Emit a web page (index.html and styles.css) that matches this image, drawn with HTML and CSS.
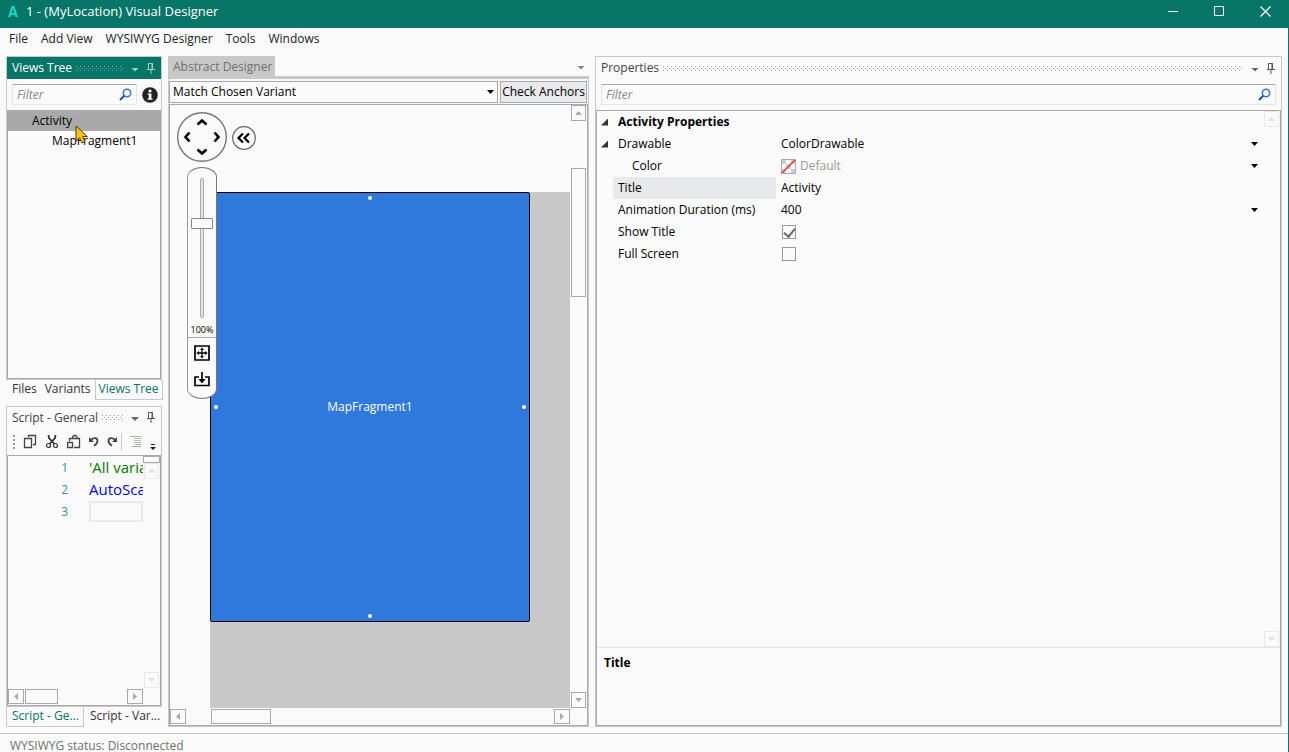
FILE: index.html
```html
<!DOCTYPE html>
<html lang="en">

<head>
    <meta charset="UTF-8">
    <meta name="viewport" content="width=device-width, initial-scale=1.0">
    <title>1 - (MyLocation) Visual Designer</title>
    <link rel="stylesheet" href="styles.css">
</head>

<body>
    <!-- shared icons -->
    <svg class="sprite" aria-hidden="true">
        <symbol id="pin" viewBox="0 0 8 11">
            <path d="M0 6.5H8M1.5 6V.5H5.5V6M5 0V6M4 7V11" fill="none" stroke="currentColor" />
        </symbol>
        <symbol id="search" viewBox="0 0 13 13">
            <circle cx="8" cy="5" r="3.7" fill="none" stroke="#3c78c3" stroke-width="1.6" />
            <path d="M5.2 7.8L1 12" stroke="#24509a" stroke-width="2" />
        </symbol>
    </svg>

    <header class="title-bar">
        <svg class="app-logo" width="10" height="11" viewBox="0 0 10 11">
            <path d="M0 11L3.6 0H6.4L10 11H7.4L6.8 9H3.2L2.6 11ZM3.8 6.9H6.2L5 2.8Z" fill="#1fd1c1" fill-rule="evenodd" />
        </svg>
        <h1>1 - (MyLocation) Visual Designer</h1>
        <div class="window-buttons">
            <button type="button" aria-label="Minimize"><svg width="11" height="11"><path d="M0 5.5H10" stroke="#fff" /></svg></button>
            <button type="button" aria-label="Maximize"><svg width="11" height="11"><path d="M.5 .5H9.5V9.5H.5Z" stroke="#fff" fill="none" /></svg></button>
            <button type="button" aria-label="Close"><svg width="11" height="11"><path d="M.5 .5L10.5 10.5M10.5 .5L.5 10.5" stroke="#fff" stroke-width="1.2" /></svg></button>
        </div>
    </header>

    <nav class="menu">
        <button type="button">File</button>
        <button type="button">Add View</button>
        <button type="button">WYSIWYG Designer</button>
        <button type="button">Tools</button>
        <button type="button">Windows</button>
    </nav>

    <main class="workspace">
        <div class="sidebar">
            <section class="dock">
                <div class="panel">
                    <div class="panel-header active">
                        <h2>Views Tree</h2>
                        <span class="grip"></span>
                        <button type="button" class="arrow-btn" aria-label="Window position"></button>
                        <button type="button" class="pin-btn" aria-label="Auto hide"><svg width="8" height="11"><use href="#pin" /></svg></button>
                    </div>
                    <div class="filter-row">
                        <label class="filter">
                            <input type="text" placeholder="Filter" aria-label="Filter views">
                            <svg width="13" height="13"><use href="#search" /></svg>
                        </label>
                        <button type="button" class="info" aria-label="Info">
                            <svg width="16" height="16" viewBox="0 0 16 16">
                                <circle cx="8" cy="8" r="7.8" fill="#222" />
                                <circle cx="8" cy="4" r="1.6" fill="#fff" />
                                <path d="M5.8 6.5H9.4V11.4H10.6V12.8H5.6V11.4H6.8V7.9H5.8Z" fill="#fff" />
                            </svg>
                        </button>
                    </div>
                    <ul class="tree">
                        <li class="selected">Activity
                            <svg class="pointer" width="14" height="19" viewBox="0 0 14 19">
                                <path d="M1 1V16L4.5 12.8L7 18L10 16.6L7.6 11.6H12.4Z" fill="#ffc20e" stroke="#4a3a10" />
                            </svg>
                        </li>
                        <li class="child">MapFragment1</li>
                    </ul>
                </div>
                <div class="tabs">
                    <button type="button">Files</button>
                    <button type="button">Variants</button>
                    <button type="button" class="current">Views Tree</button>
                </div>
            </section>

            <section class="dock">
                <div class="panel">
                    <div class="panel-header">
                        <h2>Script - General</h2>
                        <span class="grip"></span>
                        <button type="button" class="arrow-btn" aria-label="Window position"></button>
                        <button type="button" class="pin-btn" aria-label="Auto hide"><svg width="8" height="11"><use href="#pin" /></svg></button>
                    </div>
                    <div class="toolbar">
                        <span class="handle"></span>
                        <button type="button" aria-label="Copy">
                            <svg width="14" height="15" viewBox="0 0 14 15"><path d="M5.5 3V1.5H12.5V10.5H10M1.5 4.5H8.5V13.5H1.5Z" fill="none" stroke="#444" stroke-width="1.3" /></svg>
                        </button>
                        <button type="button" aria-label="Cut">
                            <svg width="14" height="15" viewBox="0 0 14 15"><path d="M3.5 1L4 4L9.5 10M10.5 1L10 4L4.5 10" fill="none" stroke="#333" stroke-width="1.8" /><circle cx="3.5" cy="11.5" r="2" fill="none" stroke="#333" stroke-width="1.2" /><circle cx="10.5" cy="11.5" r="2" fill="none" stroke="#333" stroke-width="1.2" /></svg>
                        </button>
                        <button type="button" aria-label="Paste">
                            <svg width="14" height="15" viewBox="0 0 14 15"><path d="M2.5 7V4.5H12.5V13.5H7M5.5 4.5V3L7 1.5H8.5L10 3V4.5M.5 8.5H5.5V13.5H.5Z" fill="none" stroke="#444" stroke-width="1.3" /></svg>
                        </button>
                        <button type="button" aria-label="Undo">
                            <svg width="10" height="11" viewBox="0 0 10 11"><path d="M1.5 4.5C4 1 8.5 1.5 8.5 5C8.5 7.5 7 8.5 5 9.8" fill="none" stroke="#444" stroke-width="1.8" /><path d="M0 1V6H5Z" fill="#444" /></svg>
                        </button>
                        <button type="button" aria-label="Redo">
                            <svg width="10" height="11" viewBox="0 0 10 11"><path d="M8.5 4.5C6 1 1.5 1.5 1.5 5C1.5 7.5 3 8.5 5 9.8" fill="none" stroke="#444" stroke-width="1.8" /><path d="M10 1V6H5Z" fill="#444" /></svg>
                        </button>
                        <span class="separator"></span>
                        <button type="button" class="indent" aria-label="Indent">
                            <svg width="12" height="11" viewBox="0 0 12 11"><path d="M0 .5H11M2 10.5H11M5 8.5H11" stroke="#aaa" /><path d="M4 2.5H11M4 4.5H11M4 6.5H11" stroke="#b5c8a8" /></svg>
                        </button>
                        <button type="button" class="overflow" aria-label="More">
                            <svg width="6" height="6" viewBox="0 0 6 6"><path d="M1 .5H5" stroke="#222" /><path d="M0 3H6L3 6Z" fill="#222" /></svg>
                        </button>
                    </div>
                    <div class="editor">
                        <ol class="code">
                            <li><span class="number">1</span><span class="line comment">'All varia</span></li>
                            <li><span class="number">2</span><span class="line keyword">AutoSca</span></li>
                            <li><span class="number">3</span><span class="line caret"></span></li>
                        </ol>
                        <div class="scroll vertical faded">
                            <span class="splitter"></span>
                            <button type="button" class="step up" aria-label="Scroll up"></button>
                            <button type="button" class="step down" aria-label="Scroll down"></button>
                        </div>
                        <div class="scroll horizontal">
                            <button type="button" class="step left" aria-label="Scroll left"></button>
                            <span class="thumb"></span>
                            <button type="button" class="step right" aria-label="Scroll right"></button>
                        </div>
                    </div>
                </div>
                <div class="tabs halves">
                    <button type="button" class="current">Script - Ge...</button>
                    <button type="button">Script - Var...</button>
                </div>
            </section>
        </div>

        <section class="designer">
            <div class="document-tabs">
                <button type="button">Abstract Designer</button>
                <button type="button" class="arrow-btn" aria-label="Open documents"></button>
            </div>
            <div class="designer-body">
                <div class="variant-row">
                    <div class="combo">
                        <select aria-label="Variant">
                            <option>Match Chosen Variant</option>
                        </select>
                    </div>
                    <button type="button" class="check-anchors">Check Anchors</button>
                </div>
                <div class="canvas-area">
                    <div class="canvas">
                        <div class="sheet"></div>
                        <div class="view">
                            <i class="dot top"></i>
                            <i class="dot left"></i>
                            <i class="dot right"></i>
                            <i class="dot bottom"></i>
                            MapFragment1
                        </div>
                        <button type="button" class="pan" aria-label="Pan">
                            <svg width="50" height="50" viewBox="0 0 50 50">
                                <circle cx="25" cy="25" r="24.3" fill="#fafafa" stroke="#777" stroke-width="1.4" />
                                <path d="M20.5 12.5L25 8.5L29.5 12.5M20.5 37.5L25 41.5L29.5 37.5M12.5 20.5L8.5 25L12.5 29.5M37.5 20.5L41.5 25L37.5 29.5" fill="none" stroke="#000" stroke-width="2.6" />
                            </svg>
                        </button>
                        <button type="button" class="collapse" aria-label="Collapse">
                            <svg width="24" height="24" viewBox="0 0 24 24">
                                <circle cx="12" cy="12" r="11.3" fill="#fafafa" stroke="#666" stroke-width="1.2" />
                                <path d="M11 7.5L6.5 12L11 16.5M17 7.5L12.5 12L17 16.5" fill="none" stroke="#000" stroke-width="2.2" />
                            </svg>
                        </button>
                        <div class="zoom-bar">
                            <input type="range" min="0" max="100" value="69" aria-label="Zoom">
                            <span class="zoom-value">100%</span>
                            <div class="zoom-buttons">
                                <button type="button" aria-label="Fit">
                                    <svg width="16" height="16" viewBox="0 0 16 16">
                                        <path d="M1 1H15V15H1Z" fill="none" stroke="#000" stroke-width="1.7" />
                                        <path d="M8 4V12M4 8H12" stroke="#000" stroke-width="1.3" />
                                        <path d="M8 2.4L10 5H6ZM8 13.6L10 11H6ZM2.4 8L5 6V10ZM13.6 8L11 6V10Z" />
                                    </svg>
                                </button>
                                <button type="button" aria-label="Load">
                                    <svg width="16" height="15" viewBox="0 0 16 15">
                                        <path d="M5 5H1V13.5H15V5H11" fill="none" stroke="#000" stroke-width="1.7" />
                                        <path d="M8 0V9" stroke="#000" stroke-width="1.7" />
                                        <path d="M4.5 7L8 11.5L11.5 7Z" />
                                    </svg>
                                </button>
                            </div>
                        </div>
                    </div>
                    <div class="scroll vertical">
                        <button type="button" class="step up" aria-label="Scroll up"></button>
                        <span class="thumb"></span>
                        <button type="button" class="step down" aria-label="Scroll down"></button>
                    </div>
                    <div class="scroll horizontal">
                        <button type="button" class="step left" aria-label="Scroll left"></button>
                        <span class="thumb"></span>
                        <button type="button" class="step right" aria-label="Scroll right"></button>
                    </div>
                </div>
            </div>
        </section>

        <section class="panel properties">
            <div class="panel-header">
                <h2>Properties</h2>
                <span class="grip"></span>
                <button type="button" class="arrow-btn" aria-label="Window position"></button>
                <button type="button" class="pin-btn" aria-label="Auto hide"><svg width="8" height="11"><use href="#pin" /></svg></button>
            </div>
            <div class="filter-row">
                <label class="filter">
                    <input type="text" placeholder="Filter" aria-label="Filter properties">
                    <svg width="13" height="13"><use href="#search" /></svg>
                </label>
            </div>
            <div class="grid-box">
                <div class="grid-area">
                    <table>
                        <tr>
                            <td class="toggle"><i class="expander"></i></td>
                            <th class="group" colspan="2">Activity Properties</th>
                        </tr>
                        <tr>
                            <td class="toggle"><i class="expander"></i></td>
                            <th><label for="drawable">Drawable</label></th>
                            <td><div class="combo"><select id="drawable"><option>ColorDrawable</option></select></div></td>
                        </tr>
                        <tr>
                            <td class="toggle"></td>
                            <th class="nested"><label for="color">Color</label></th>
                            <td>
                                <div class="combo color">
                                    <svg width="15" height="15" viewBox="0 0 15 15">
                                        <path d="M.5 .5H14.5V14.5H.5Z" fill="#fafafa" stroke="#aaa" />
                                        <path d="M1 1H5V5H1ZM10 1H14V5H10ZM5 5H10V10H5ZM1 10H5V14H1ZM10 10H14V14H10Z" fill="#ccc" />
                                        <path d="M1 14L14 1" stroke="#f22" stroke-width="1.2" />
                                    </svg>
                                    <select id="color"><option>Default</option></select>
                                </div>
                            </td>
                        </tr>
                        <tr>
                            <td class="toggle"></td>
                            <th class="chosen"><label for="title">Title</label></th>
                            <td><input type="text" id="title" value="Activity"></td>
                        </tr>
                        <tr>
                            <td class="toggle"></td>
                            <th><label for="duration">Animation Duration (ms)</label></th>
                            <td><div class="combo"><select id="duration"><option>400</option></select></div></td>
                        </tr>
                        <tr>
                            <td class="toggle"></td>
                            <th><label for="showTitle">Show Title</label></th>
                            <td><input type="checkbox" id="showTitle" checked></td>
                        </tr>
                        <tr>
                            <td class="toggle"></td>
                            <th><label for="fullScreen">Full Screen</label></th>
                            <td><input type="checkbox" id="fullScreen"></td>
                        </tr>
                    </table>
                    <div class="scroll vertical faded">
                        <button type="button" class="step up" aria-label="Scroll up"></button>
                        <button type="button" class="step down" aria-label="Scroll down"></button>
                    </div>
                </div>
                <div class="description">Title</div>
            </div>
        </section>
    </main>

    <footer class="status">WYSIWYG status: Disconnected</footer>
</body>

</html>
```
FILE: styles.css
```css
* {
    box-sizing: border-box;
}

body {
    margin: 0;
    height: 100vh;
    display: flex;
    flex-direction: column;
    overflow: hidden;
    background-color: #fafafa;
    border-right: 1px solid #077568;
    color: #000;
    font-family: "Open Sans", "Noto Sans", sans-serif;
    font-size: 12px;
    line-height: 16px;
}

button,
input,
select {
    margin: 0;
    padding: 0;
    border: none;
    background: none;
    color: inherit;
    font: inherit;
    border-radius: 0;
    outline: none;
}

h1,
h2 {
    margin: 0;
    font-size: inherit;
    font-weight: normal;
}

svg {
    display: block;
    flex: none;
}

.sprite {
    position: absolute;
    width: 0;
    height: 0;
}

/* Title bar and menu */
.title-bar {
    display: flex;
    align-items: center;
    height: 28px;
    padding: 0 0 6px 8px;
    background-color: #077568;
    color: white;
}

.title-bar h1 {
    margin-left: 8px;
    font-size: 13px;
}

.window-buttons {
    display: flex;
    margin-left: auto;
}

.window-buttons button {
    display: flex;
    justify-content: center;
    width: 46px;
}

.menu {
    display: flex;
    gap: 13px;
    padding: 3px 9px 9px;
    color: #222;
}

/* Docked panels */
.workspace {
    flex: 1;
    min-height: 0;
    display: grid;
    grid-template-columns: 156px 421px 1fr;
    gap: 6px;
    padding: 0 6px;
}

.sidebar {
    display: grid;
    grid-template-rows: 343fr 321fr;
    gap: 6px;
    min-height: 0;
}

.dock {
    display: flex;
    flex-direction: column;
    min-width: 0;
    min-height: 0;
}

.panel {
    flex: 1;
    min-height: 0;
    display: flex;
    flex-direction: column;
    border: 1px solid #c8c8c8;
}

.panel-header {
    display: flex;
    align-items: center;
    height: 22px;
    padding: 0 6px 0 5px;
    color: #444;
}

.panel-header.active {
    background-color: #077568;
    color: white;
}

.grip {
    flex: 1;
    height: 5px;
    margin: 0 8px 0 4px;
    background-image: conic-gradient(from 270deg at 1px 1px, #999 90deg, transparent 0), conic-gradient(from 270deg at 1px 1px, #999 90deg, transparent 0);
    background-size: 4px 4px;
    background-position: 0 0, 2px 2px;
}

.active .grip {
    background-image: conic-gradient(from 270deg at 1px 1px, #6fb5ac 90deg, transparent 0), conic-gradient(from 270deg at 1px 1px, #6fb5ac 90deg, transparent 0);
}

.arrow-btn {
    width: 8px;
    height: 4px;
    margin-top: 3px;
    background-color: #666;
    clip-path: polygon(0 0, 100% 0, 50% 100%);
}

.pin-btn {
    margin-left: 8px;
    color: #555;
}

.active .arrow-btn {
    background-color: #9fd0c9;
}

.active .pin-btn {
    color: #9fd0c9;
}

.filter-row {
    display: flex;
    align-items: center;
    gap: 5px;
    padding: 5px 3px 5px 5px;
}

.filter {
    flex: 1;
    min-width: 0;
    height: 21px;
    display: flex;
    align-items: center;
    padding: 0 4px;
    border: 1px solid #e5e5e5;
    border-top-color: #a9a9a9;
}

.filter input {
    flex: 1;
    min-width: 0;
}

.filter input::placeholder {
    color: #888;
    font-style: italic;
}

.tree {
    position: relative;
    flex: 1;
    margin: 0;
    padding: 0;
    list-style: none;
    border: 1px solid #a9a9a9;
    border-top: none;
}

.tree li {
    height: 21px;
    padding: 3px 0 2px 24px;
}

.tree li.child {
    padding-left: 44px;
    padding-top: 2px;
}

.tree .selected {
    background-color: #a9a9a9;
}

.pointer {
    position: absolute;
    left: 67px;
    top: 15px;
}

/* Tabs below a panel */
.tabs {
    display: flex;
    height: 20px;
    color: #333;
}

.tabs button {
    padding: 0 3px;
    border: 1px solid transparent;
    border-top: none;
    white-space: nowrap;
}

.tabs button:first-child {
    padding-left: 5px;
}

.tabs .current {
    border-color: #c8c8c8;
    color: #077568;
}

.tabs:not(.halves) {
    justify-content: space-between;
}

.halves button {
    width: 78px;
    padding-left: 5px;
    text-align: left;
}

/* Script editor */
.toolbar {
    display: flex;
    align-items: center;
    height: 26px;
    padding-left: 6px;
}

.toolbar button {
    margin-right: 8px;
}

.handle {
    width: 2px;
    height: 14px;
    margin-right: 8px;
    background: repeating-linear-gradient(#999 0 2px, transparent 2px 4px);
}

.separator {
    width: 1px;
    height: 18px;
    margin: 0 8px 0 -4px;
    background-color: #c8c8c8;
}

.toolbar .overflow {
    margin: 10px 0 0;
}

.editor {
    flex: 1;
    min-height: 0;
    display: grid;
    grid-template: 1fr 17px / 1fr 17px;
    border: 1px solid #a9a9a9;
}

.code {
    margin: 0;
    padding: 1px 0 0;
    list-style: none;
    overflow: hidden;
}

.code li {
    display: flex;
    align-items: center;
    height: 22px;
}

.number {
    width: 60px;
    margin-right: 21px;
    color: #2b91af;
    text-align: right;
}

.line {
    flex: 1;
    overflow: hidden;
    white-space: nowrap;
    font-size: 15px;
    line-height: 21px;
}

.comment {
    color: green;
}

.keyword {
    color: blue;
}

.caret {
    height: 21px;
    border: 2px solid #eaeaea;
}

/* Scroll bars */
.scroll {
    display: flex;
    align-items: center;
    justify-content: space-between;
}

.scroll.vertical {
    flex-direction: column;
}

.scroll.horizontal {
    grid-column: 1;
}

.step {
    display: flex;
    align-items: center;
    justify-content: center;
    width: 16px;
    height: 15px;
    border: 1px solid #a9a9a9;
    color: #a9a9a9;
}

.vertical .step {
    width: 15px;
    height: 16px;
}

.step::after {
    content: "";
    width: 7px;
    height: 4px;
    background-color: currentColor;
    clip-path: polygon(0 0, 100% 0, 50% 100%);
}

.step.up::after {
    clip-path: polygon(0 100%, 100% 100%, 50% 0);
}

.step.left::after,
.step.right::after {
    width: 4px;
    height: 7px;
    clip-path: polygon(0 0, 100% 50%, 0 100%);
}

.step.left::after {
    clip-path: polygon(100% 0, 0 50%, 100% 100%);
}

.faded .step {
    border-color: #e8e8e8;
    color: #e0e0e0;
}

.thumb {
    border: 1px solid #a9a9a9;
}

.splitter {
    align-self: stretch;
    height: 7px;
    border: 1px solid #a9a9a9;
}

.editor .down {
    margin-top: auto;
}

.editor .thumb {
    width: 33px;
    height: 15px;
    margin: 0 auto 0 1px;
}

/* Designer */
.designer {
    display: flex;
    flex-direction: column;
    min-height: 0;
}

.document-tabs {
    display: flex;
    justify-content: space-between;
    align-items: center;
    height: 23px;
    padding-right: 4px;
    border-bottom: 3px solid #c8c8c8;
}

.document-tabs button:first-child {
    height: 20px;
    padding: 2px 3px 0 5px;
    background-color: #c8c8c8;
    color: #707070;
}

.document-tabs .arrow-btn {
    background-color: #888;
}

.designer-body {
    flex: 1;
    min-height: 0;
    display: flex;
    flex-direction: column;
    border: 1px solid #c8c8c8;
    border-top: none;
}

.variant-row {
    display: flex;
    gap: 2px;
    height: 25px;
    padding: 2px 1px 1px 0;
}

.combo {
    position: relative;
    flex: 1;
    display: flex;
    align-items: center;
}

.combo select {
    flex: 1;
    appearance: none;
}

.combo::after {
    content: "";
    position: absolute;
    right: 3px;
    width: 7px;
    height: 4px;
    background-color: #000;
    clip-path: polygon(0 0, 100% 0, 50% 100%);
    pointer-events: none;
}

.variant-row .combo {
    padding-left: 3px;
    border: 1px solid #a9a9a9;
}

.check-anchors {
    width: 87px;
    border: 1px solid #a9a9a9;
    background-color: #e8e9eb;
    white-space: nowrap;
}

.canvas-area {
    flex: 1;
    min-height: 0;
    display: grid;
    grid-template: 1fr 17px / 1fr 17px;
    border: 1px solid #a9a9a9;
}

.canvas {
    position: relative;
    overflow: hidden;
}

.sheet {
    position: absolute;
    left: 40px;
    top: 87px;
    right: 0;
    bottom: 0;
    background-color: #c8c8c8;
}

.view {
    position: absolute;
    left: 40px;
    top: 87px;
    width: 320px;
    height: 430px;
    display: flex;
    align-items: center;
    justify-content: center;
    border: 1px solid #000;
    border-radius: 2px;
    background-color: #2f78dc;
    color: white;
}

.dot {
    position: absolute;
    width: 4px;
    height: 4px;
    border-radius: 50%;
    background-color: white;
}

.dot.top {
    top: 3px;
}

.dot.bottom {
    bottom: 3px;
}

.dot.left {
    left: 3px;
}

.dot.right {
    right: 3px;
}

.pan {
    position: absolute;
    left: 7px;
    top: 7px;
}

.collapse {
    position: absolute;
    left: 62px;
    top: 21px;
}

.zoom-bar {
    position: absolute;
    left: 17px;
    top: 62px;
    width: 30px;
    display: flex;
    flex-direction: column;
    align-items: center;
    padding-top: 10px;
    border: 1px solid #777;
    border-left-color: #999;
    border-radius: 15px / 10px;
    background-color: #fafafa;
}

.zoom-bar input {
    appearance: none;
    writing-mode: vertical-lr;
    direction: rtl;
    width: 22px;
    height: 140px;
}

.zoom-bar input::-webkit-slider-runnable-track {
    width: 4px;
    border: 1px solid #a9a9a9;
    border-radius: 2px;
    background-color: #e5e5e5;
}

.zoom-bar input::-webkit-slider-thumb {
    appearance: none;
    width: 22px;
    height: 11px;
    margin-left: -10px;
    border: 1px solid #888;
    border-radius: 1px;
    background-color: #fafafa;
}

.zoom-value {
    margin-top: 5px;
    font-size: 9px;
    line-height: 14px;
}

.zoom-buttons {
    align-self: stretch;
    display: flex;
    flex-direction: column;
    align-items: center;
    gap: 11px;
    padding: 7px 0 11px;
    border-top: 1px solid #a9a9a9;
}

.canvas-area .vertical .thumb {
    width: 15px;
    height: 129px;
    margin: 47px 0 auto;
}

.canvas-area .horizontal .thumb {
    width: 60px;
    height: 15px;
    margin: 0 auto 0 25px;
}

/* Properties */
.properties .filter-row {
    padding-right: 5px;
}

.grid-box {
    flex: 1;
    min-height: 0;
    display: flex;
    flex-direction: column;
    border: 1px solid #a9a9a9;
}

.grid-area {
    flex: 1;
    min-height: 0;
    display: flex;
    align-items: flex-start;
}

.grid-area .scroll {
    align-self: stretch;
    width: 17px;
}

table {
    flex: 1;
    border-collapse: collapse;
    table-layout: fixed;
}

tr {
    height: 22px;
}

th,
td {
    padding: 0;
    font-weight: normal;
    text-align: left;
    vertical-align: middle;
}

th {
    width: 163px;
    padding-left: 5px;
}

td + th + td {
    padding-left: 5px;
}

th.group {
    font-weight: bold;
}

th.nested {
    padding-left: 19px;
}

th.chosen {
    background-color: #e8e9eb;
    border-bottom: 1px solid #fafafa;
}

.toggle {
    width: 16px;
    padding-left: 4px;
}

.expander {
    display: block;
    width: 7px;
    height: 7px;
    background-color: #333;
    clip-path: polygon(100% 0, 100% 100%, 0 100%);
}

.color {
    gap: 4px;
    color: #999;
}

td .combo::after {
    right: 5px;
}

input[type="checkbox"] {
    appearance: none;
    display: block;
    width: 14px;
    height: 14px;
    margin-left: 1px;
    border: 1px solid #999;
}

input[type="checkbox"]:checked::after {
    content: "";
    display: block;
    width: 5px;
    height: 9px;
    margin-left: 3px;
    border: solid #666;
    border-width: 0 2px 2px 0;
    transform: rotate(40deg);
}

.description {
    height: 78px;
    padding: 7px;
    border-top: 1px solid #e5e5e5;
    font-weight: bold;
}

.status {
    height: 19px;
    margin-top: 6px;
    padding: 4px 10px 0;
    border-top: 1px solid #c8c8c8;
    color: #707070;
    line-height: 15px;
}
```
